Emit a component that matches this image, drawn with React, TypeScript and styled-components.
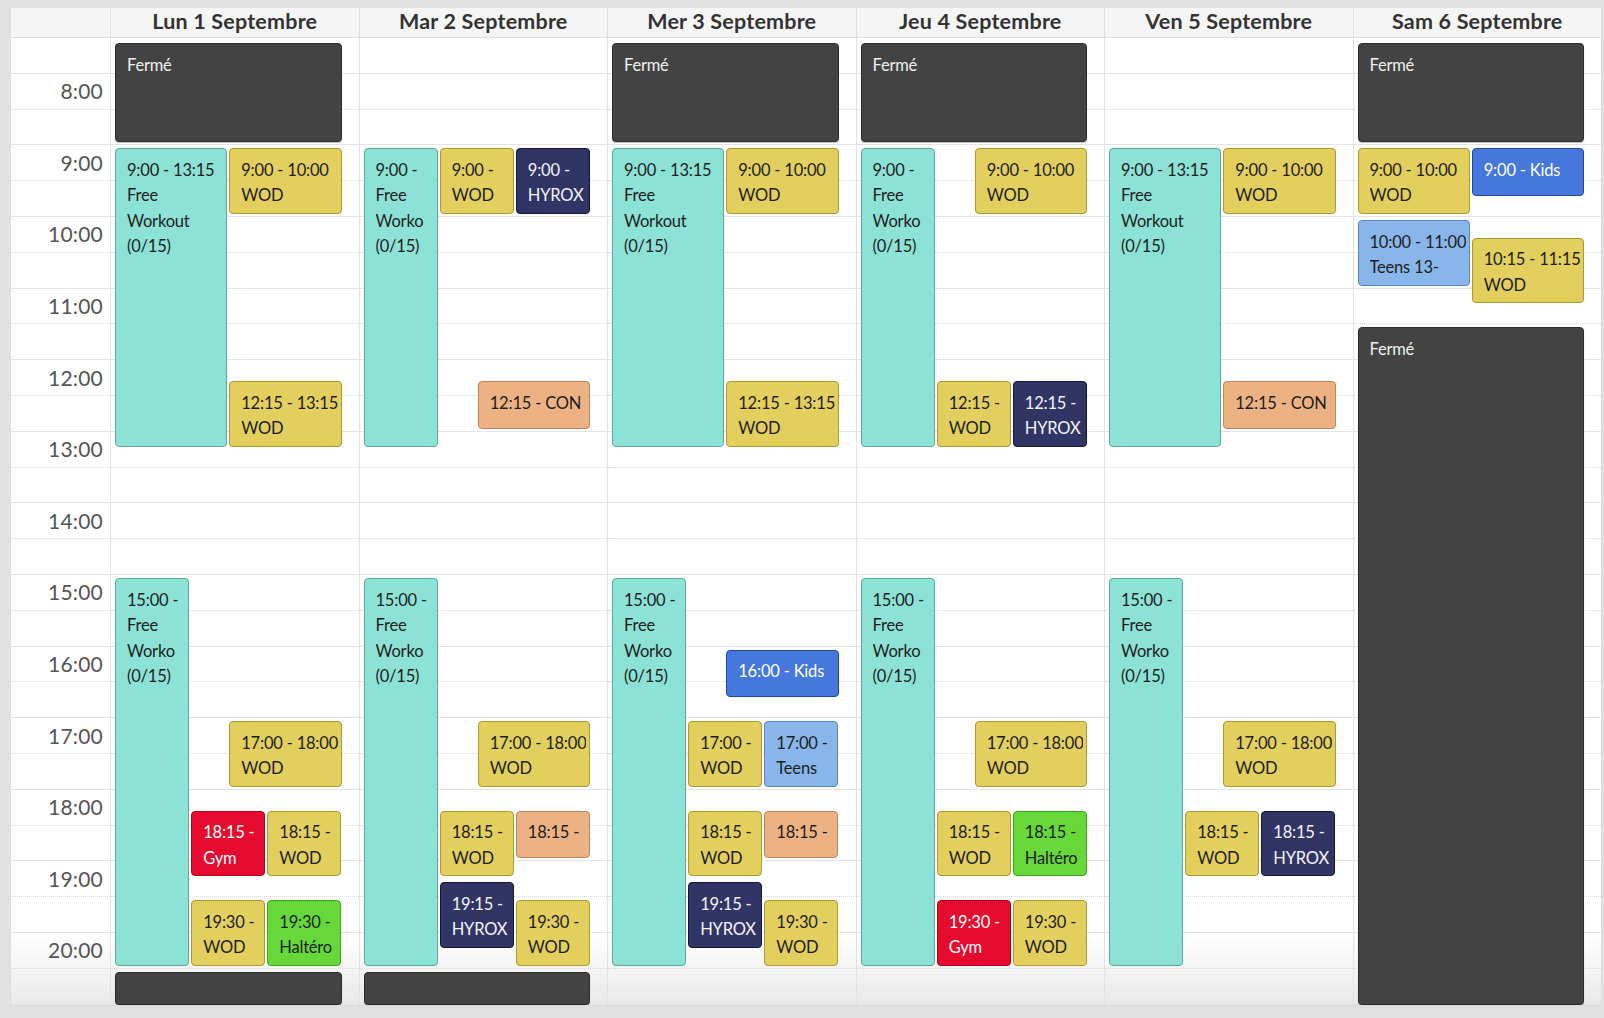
import styled, { createGlobalStyle } from 'styled-components';

const GlobalStyle = createGlobalStyle`
  html, body {
    margin: 0;
    padding: 0;
    background: #e1e1e1;
  }
  * {
    box-sizing: border-box;
  }
`;

const FONT = `'Lato', 'Noto Sans', 'DejaVu Sans', sans-serif`;
const HOUR = 71.6;
const FIRST = 7.5;

const Frame = styled.div`
  width: 1604px;
  height: 1018px;
  padding: 8px 2px 12px 10px;
  font-family: ${FONT};
`;

const Calendar = styled.div`
  height: 100%;
  display: flex;
  flex-direction: column;
  background: #fff;
  border: 1px solid #dcdcdc;
  border-top: none;
  overflow: hidden;
`;

const HeaderRow = styled.div`
  display: grid;
  grid-template-columns: 99px repeat(6, 1fr);
  height: 30px;
  flex: none;
  background: #f5f5f5;
  border-bottom: 1px solid #dedede;
`;

const HeaderCell = styled.div`
  display: flex;
  align-items: center;
  justify-content: center;
  padding-bottom: 3px;
  border-left: 1px solid #e2e2e2;
  font-size: 21.5px;
  font-weight: 700;
  color: #333;
  letter-spacing: 0.2px;
  &:first-child {
    border-left: none;
  }
`;

const Body = styled.div`
  flex: 1;
  display: grid;
  grid-template-columns: 99px repeat(6, 1fr);
  overflow: hidden;
  background: linear-gradient(to bottom, #fff 0, #fff calc(100% - 70px), #e9e9e9 100%);
`;

const TimeColumn = styled.div`
  display: flex;
  flex-direction: column;
`;

const DayColumn = styled.div`
  position: relative;
  display: flex;
  flex-direction: column;
  border-left: 1px solid #e2e2e2;
`;

const Slot = styled.div<{ $hourEnd: boolean }>`
  height: ${HOUR / 2}px;
  flex: none;
  border-bottom: 1px ${({ $hourEnd }) => ($hourEnd ? 'solid #e4e4e4' : 'dotted #d8d8d8')};
`;

const TimeSlot = styled(Slot)`
  display: flex;
  align-items: center;
  justify-content: flex-end;
  padding-right: 7px;
  padding-bottom: 1px;
  font-size: 21px;
  color: #555;
  letter-spacing: 0.2px;
`;

type Kind = 'closed' | 'free' | 'wod' | 'con' | 'hyrox' | 'gym' | 'halt' | 'kids' | 'teens';

const palette: Record<Kind, { bg: string; border: string; text: string }> = {
  closed: { bg: '#434343', border: '#2c2c2c', text: '#f0f0f0' },
  free: { bg: '#8ce3d5', border: '#59ab9c', text: '#1d1d1d' },
  wod: { bg: '#e2cf5d', border: '#ad9a33', text: '#1d1d1d' },
  con: { bg: '#edb283', border: '#c4845a', text: '#1d1d1d' },
  hyrox: { bg: '#303566', border: '#14173a', text: '#f4f4f8' },
  gym: { bg: '#e60b2e', border: '#a9071f', text: '#fff' },
  halt: { bg: '#66d83a', border: '#3ca61c', text: '#1d1d1d' },
  kids: { bg: '#4677dc', border: '#2347a8', text: '#fff' },
  teens: { bg: '#88b5ea', border: '#5687c4', text: '#1d1d1d' },
};

const EventBox = styled.div<{ $kind: Kind }>`
  position: absolute;
  overflow: hidden;
  border-radius: 4px;
  border: 1px solid ${({ $kind }) => palette[$kind].border};
  background: ${({ $kind }) => palette[$kind].bg};
  color: ${({ $kind }) => palette[$kind].text};
  padding: ${({ $kind }) => ($kind === 'closed' ? '9px 3px 0 11px' : '8.5px 3px 0 11px')};
  font-size: 16.5px;
  line-height: 25.5px;
  letter-spacing: -0.2px;
  box-shadow: ${({ $kind }) => ($kind === 'closed' ? '0 1px 1px rgba(0,0,0,0.25)' : 'none')};
`;

const Line = styled.div`
  white-space: nowrap;
  overflow: hidden;
`;

type Ev = {
  day: number;
  start: number;
  end: number;
  col: number;
  cols: number;
  kind: Kind;
  lines: string[];
};

const wideFree = ['9:00 - 13:15', 'Free', 'Workout', '(0/15)'];
const narrowFree = (t: string) => [t, 'Free', 'Worko', '(0/15)'];

const events: Ev[] = [
  // Lun
  { day: 0, start: 7.53, end: 9, col: 0, cols: 1, kind: 'closed', lines: ['Fermé'] },
  { day: 0, start: 9, end: 13.25, col: 0, cols: 2, kind: 'free', lines: wideFree },
  { day: 0, start: 9, end: 10, col: 1, cols: 2, kind: 'wod', lines: ['9:00 - 10:00', 'WOD'] },
  { day: 0, start: 12.25, end: 13.25, col: 1, cols: 2, kind: 'wod', lines: ['12:15 - 13:15', 'WOD'] },
  { day: 0, start: 15, end: 20.5, col: 0, cols: 3, kind: 'free', lines: narrowFree('15:00 -') },
  { day: 0, start: 17, end: 18, col: 1, cols: 2, kind: 'wod', lines: ['17:00 - 18:00', 'WOD'] },
  { day: 0, start: 18.25, end: 19.25, col: 1, cols: 3, kind: 'gym', lines: ['18:15 -', 'Gym'] },
  { day: 0, start: 18.25, end: 19.25, col: 2, cols: 3, kind: 'wod', lines: ['18:15 -', 'WOD'] },
  { day: 0, start: 19.5, end: 20.5, col: 1, cols: 3, kind: 'wod', lines: ['19:30 -', 'WOD'] },
  { day: 0, start: 19.5, end: 20.5, col: 2, cols: 3, kind: 'halt', lines: ['19:30 -', 'Haltéro'] },
  { day: 0, start: 20.5, end: 21.05, col: 0, cols: 1, kind: 'closed', lines: [] },
  // Mar
  { day: 1, start: 9, end: 13.25, col: 0, cols: 3, kind: 'free', lines: narrowFree('9:00 -') },
  { day: 1, start: 9, end: 10, col: 1, cols: 3, kind: 'wod', lines: ['9:00 -', 'WOD'] },
  { day: 1, start: 9, end: 10, col: 2, cols: 3, kind: 'hyrox', lines: ['9:00 -', 'HYROX'] },
  { day: 1, start: 12.25, end: 13, col: 1, cols: 2, kind: 'con', lines: ['12:15 - CON'] },
  { day: 1, start: 15, end: 20.5, col: 0, cols: 3, kind: 'free', lines: narrowFree('15:00 -') },
  { day: 1, start: 17, end: 18, col: 1, cols: 2, kind: 'wod', lines: ['17:00 - 18:00', 'WOD'] },
  { day: 1, start: 18.25, end: 19.25, col: 1, cols: 3, kind: 'wod', lines: ['18:15 -', 'WOD'] },
  { day: 1, start: 18.25, end: 19, col: 2, cols: 3, kind: 'con', lines: ['18:15 -'] },
  { day: 1, start: 19.25, end: 20.25, col: 1, cols: 3, kind: 'hyrox', lines: ['19:15 -', 'HYROX'] },
  { day: 1, start: 19.5, end: 20.5, col: 2, cols: 3, kind: 'wod', lines: ['19:30 -', 'WOD'] },
  { day: 1, start: 20.5, end: 21.05, col: 0, cols: 1, kind: 'closed', lines: [] },
  // Mer
  { day: 2, start: 7.53, end: 9, col: 0, cols: 1, kind: 'closed', lines: ['Fermé'] },
  { day: 2, start: 9, end: 13.25, col: 0, cols: 2, kind: 'free', lines: wideFree },
  { day: 2, start: 9, end: 10, col: 1, cols: 2, kind: 'wod', lines: ['9:00 - 10:00', 'WOD'] },
  { day: 2, start: 12.25, end: 13.25, col: 1, cols: 2, kind: 'wod', lines: ['12:15 - 13:15', 'WOD'] },
  { day: 2, start: 15, end: 20.5, col: 0, cols: 3, kind: 'free', lines: narrowFree('15:00 -') },
  { day: 2, start: 16, end: 16.75, col: 1, cols: 2, kind: 'kids', lines: ['16:00 - Kids'] },
  { day: 2, start: 17, end: 18, col: 1, cols: 3, kind: 'wod', lines: ['17:00 -', 'WOD'] },
  { day: 2, start: 17, end: 18, col: 2, cols: 3, kind: 'teens', lines: ['17:00 -', 'Teens'] },
  { day: 2, start: 18.25, end: 19.25, col: 1, cols: 3, kind: 'wod', lines: ['18:15 -', 'WOD'] },
  { day: 2, start: 18.25, end: 19, col: 2, cols: 3, kind: 'con', lines: ['18:15 -'] },
  { day: 2, start: 19.25, end: 20.25, col: 1, cols: 3, kind: 'hyrox', lines: ['19:15 -', 'HYROX'] },
  { day: 2, start: 19.5, end: 20.5, col: 2, cols: 3, kind: 'wod', lines: ['19:30 -', 'WOD'] },
  // Jeu
  { day: 3, start: 7.53, end: 9, col: 0, cols: 1, kind: 'closed', lines: ['Fermé'] },
  { day: 3, start: 9, end: 13.25, col: 0, cols: 3, kind: 'free', lines: narrowFree('9:00 -') },
  { day: 3, start: 9, end: 10, col: 1, cols: 2, kind: 'wod', lines: ['9:00 - 10:00', 'WOD'] },
  { day: 3, start: 12.25, end: 13.25, col: 1, cols: 3, kind: 'wod', lines: ['12:15 -', 'WOD'] },
  { day: 3, start: 12.25, end: 13.25, col: 2, cols: 3, kind: 'hyrox', lines: ['12:15 -', 'HYROX'] },
  { day: 3, start: 15, end: 20.5, col: 0, cols: 3, kind: 'free', lines: narrowFree('15:00 -') },
  { day: 3, start: 17, end: 18, col: 1, cols: 2, kind: 'wod', lines: ['17:00 - 18:00', 'WOD'] },
  { day: 3, start: 18.25, end: 19.25, col: 1, cols: 3, kind: 'wod', lines: ['18:15 -', 'WOD'] },
  { day: 3, start: 18.25, end: 19.25, col: 2, cols: 3, kind: 'halt', lines: ['18:15 -', 'Haltéro'] },
  { day: 3, start: 19.5, end: 20.5, col: 1, cols: 3, kind: 'gym', lines: ['19:30 -', 'Gym'] },
  { day: 3, start: 19.5, end: 20.5, col: 2, cols: 3, kind: 'wod', lines: ['19:30 -', 'WOD'] },
  // Ven
  { day: 4, start: 9, end: 13.25, col: 0, cols: 2, kind: 'free', lines: wideFree },
  { day: 4, start: 9, end: 10, col: 1, cols: 2, kind: 'wod', lines: ['9:00 - 10:00', 'WOD'] },
  { day: 4, start: 12.25, end: 13, col: 1, cols: 2, kind: 'con', lines: ['12:15 - CON'] },
  { day: 4, start: 15, end: 20.5, col: 0, cols: 3, kind: 'free', lines: narrowFree('15:00 -') },
  { day: 4, start: 17, end: 18, col: 1, cols: 2, kind: 'wod', lines: ['17:00 - 18:00', 'WOD'] },
  { day: 4, start: 18.25, end: 19.25, col: 1, cols: 3, kind: 'wod', lines: ['18:15 -', 'WOD'] },
  { day: 4, start: 18.25, end: 19.25, col: 2, cols: 3, kind: 'hyrox', lines: ['18:15 -', 'HYROX'] },
  // Sam
  { day: 5, start: 7.53, end: 9, col: 0, cols: 1, kind: 'closed', lines: ['Fermé'] },
  { day: 5, start: 9, end: 10, col: 0, cols: 2, kind: 'wod', lines: ['9:00 - 10:00', 'WOD'] },
  { day: 5, start: 9, end: 9.75, col: 1, cols: 2, kind: 'kids', lines: ['9:00 - Kids'] },
  { day: 5, start: 10, end: 11, col: 0, cols: 2, kind: 'teens', lines: ['10:00 - 11:00', 'Teens 13-'] },
  { day: 5, start: 10.25, end: 11.25, col: 1, cols: 2, kind: 'wod', lines: ['10:15 - 11:15', 'WOD'] },
  { day: 5, start: 11.5, end: 21.05, col: 0, cols: 1, kind: 'closed', lines: ['Fermé'] },
];

const days = [
  'Lun 1 Septembre',
  'Mar 2 Septembre',
  'Mer 3 Septembre',
  'Jeu 4 Septembre',
  'Ven 5 Septembre',
  'Sam 6 Septembre',
];

// 7:30 -> 21:00, half-hour slots
const slots = Array.from({ length: 27 }, (_, i) => FIRST + i * 0.5);

const label = (t: number) => (Number.isInteger(t) ? `${t}:00` : '');

const placeEvent = (ev: Ev): React.CSSProperties => {
  const top = (ev.start - FIRST) * HOUR + 3;
  const height = (ev.end - ev.start) * HOUR - 6;
  const frac = 1 / ev.cols;
  return {
    top,
    height,
    left: `calc(4px + (100% - 19px) * ${ev.col * frac})`,
    width: `calc((100% - 19px) * ${frac} - 2px)`,
  };
};

const App = () => {
  return (
    <>
      <GlobalStyle />
      <Frame>
        <Calendar>
          <HeaderRow>
            <HeaderCell />
            {days.map((d) => (
              <HeaderCell key={d}>{d}</HeaderCell>
            ))}
          </HeaderRow>
          <Body>
            <TimeColumn>
              {slots.map((t) => (
                <TimeSlot key={t} $hourEnd={!Number.isInteger(t)}>
                  {label(t)}
                </TimeSlot>
              ))}
            </TimeColumn>
            {days.map((d, di) => (
              <DayColumn key={d}>
                {slots.map((t) => (
                  <Slot key={t} $hourEnd={!Number.isInteger(t)} />
                ))}
                {events
                  .filter((ev) => ev.day === di)
                  .map((ev, i) => (
                    <EventBox key={i} $kind={ev.kind} style={placeEvent(ev)}>
                      {ev.lines.map((l, li) => (
                        <Line key={li}>{l}</Line>
                      ))}
                    </EventBox>
                  ))}
              </DayColumn>
            ))}
          </Body>
        </Calendar>
      </Frame>
    </>
  );
};

export default App;
